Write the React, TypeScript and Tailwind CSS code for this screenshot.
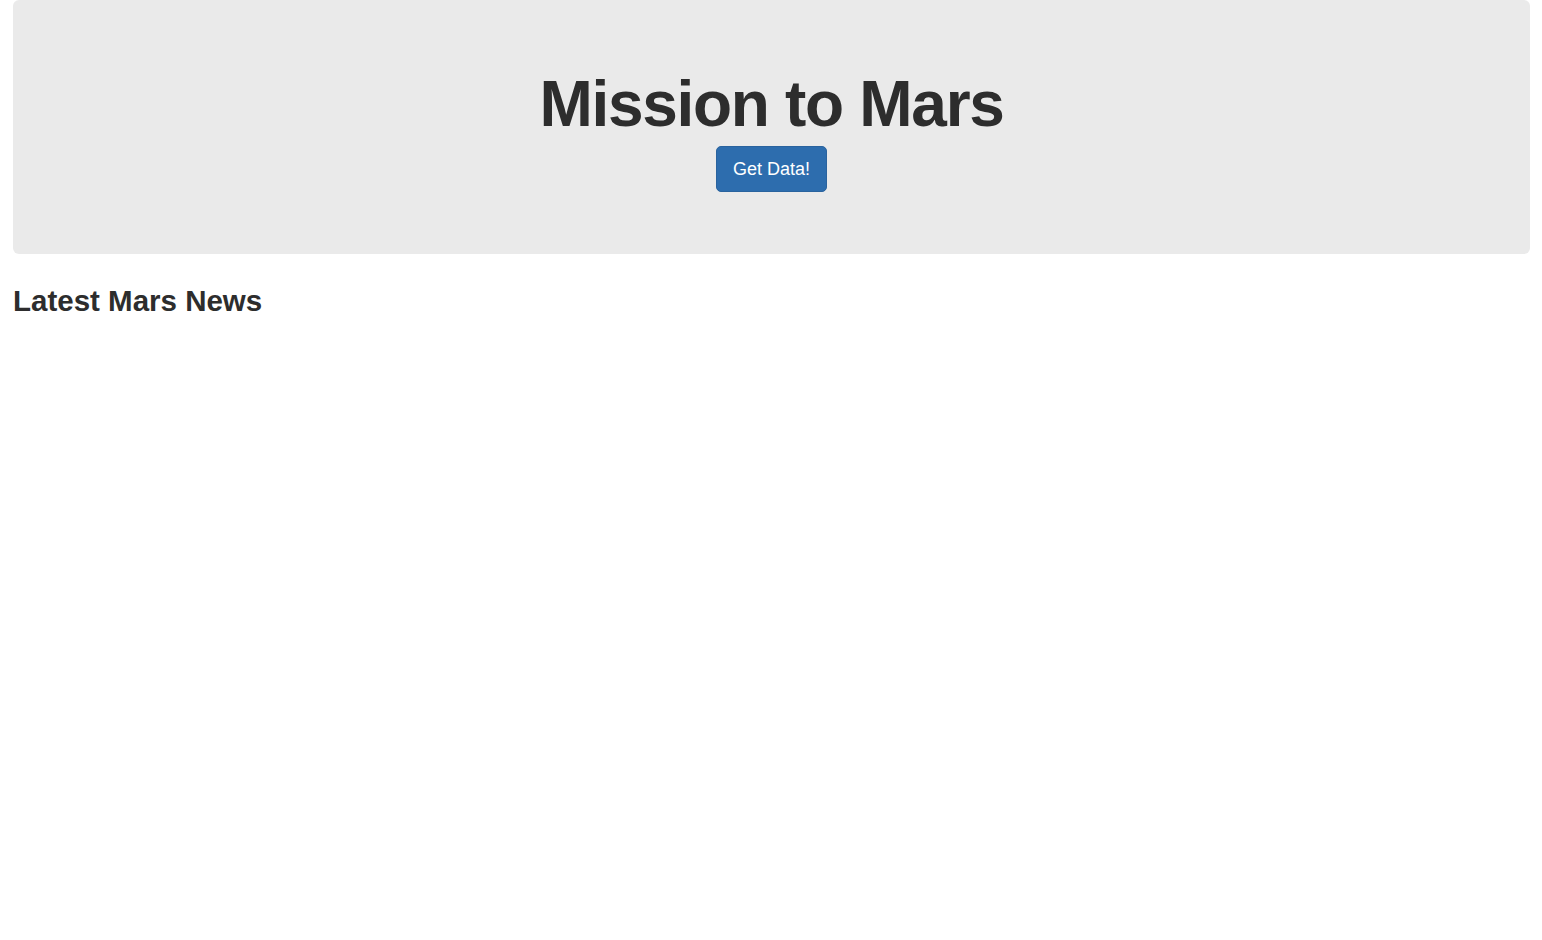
import React from "react";

export default function App() {
  return (
    <div className="min-h-screen bg-white text-[#2d2d2d] [font-family:'Liberation_Sans',Arial,sans-serif]">
      <div className="ml-[13px] mr-[12px] rounded-[6px] bg-[#eaeaea] pt-[68px] pb-[62px] text-center">
        <h1 className="text-[64px] leading-[72px] font-bold tracking-[-1.3px]">Mission to Mars</h1>
        <div className="mt-[6px] flex justify-center">
          <button className="h-[46px] rounded-[5px] border border-[#2a639e] bg-[#2d6dae] px-[16px] text-[18px] leading-[24px] text-white">
            Get Data!
          </button>
        </div>
      </div>
      <h2 className="mx-[13px] mt-[30px] text-[29.5px] leading-[33px] font-bold">Latest Mars News</h2>
    </div>
  );
}
